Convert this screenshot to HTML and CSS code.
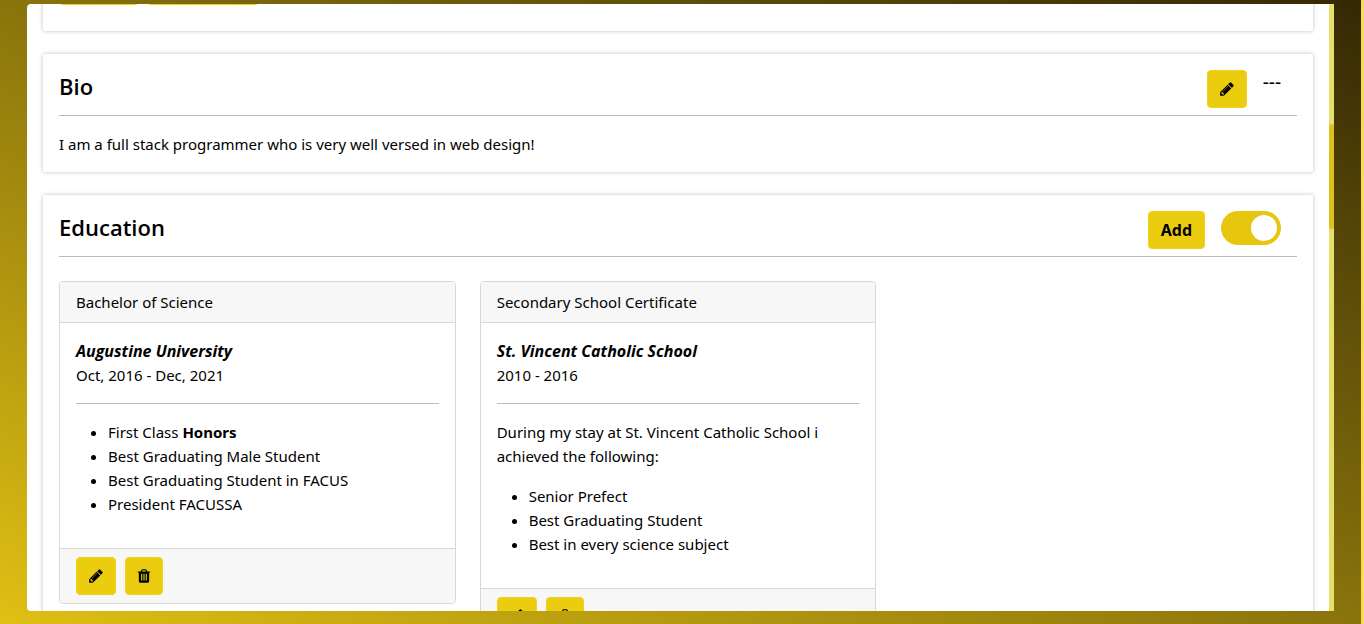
FILE: index.html
```html
<!DOCTYPE html>
<html lang="en">
<head>
<meta charset="utf-8">
<title>Profile</title>
<link rel="stylesheet" href="styles.css">
</head>
<body>
<svg class="sprite" aria-hidden="true">
  <symbol id="pencil" viewBox="0 0 1792 1792"><path d="M491 1536l91-91-235-235-91 91v107h128v128h107zm523-928q0-22-22-22-10 0-17 7l-542 542q-7 7-7 17 0 22 22 22 10 0 17-7l542-542q7-7 7-17zm-54-192l416 416-832 832h-416v-416zm683 96q0 53-37 90l-166 166-416-416 166-165q36-38 90-38 53 0 91 38l235 234q37 39 37 91z"/></symbol>
  <symbol id="trash" viewBox="112 0 1568 1792"><path d="M704 1376v-704q0-14-9-23t-23-9h-64q-14 0-23 9t-9 23v704q0 14 9 23t23 9h64q14 0 23-9t9-23zm256 0v-704q0-14-9-23t-23-9h-64q-14 0-23 9t-9 23v704q0 14 9 23t23 9h64q14 0 23-9t9-23zm256 0v-704q0-14-9-23t-23-9h-64q-14 0-23 9t-9 23v704q0 14 9 23t23 9h64q14 0 23-9t9-23zm-544-992h448l-48-117q-7-9-17-11h-317q-10 2-17 11zm928 32v64q0 14-9 23t-23 9h-96v948q0 83-47 143.5t-113 60.5h-832q-66 0-113-58.5t-47-141.5v-952h-96q-14 0-23-9t-9-23v-64q0-14 9-23t23-9h309l70-167q15-37 54-63t79-26h320q40 0 79 26t54 63l70 167h309q14 0 23 9t9 23z"/></symbol>
</svg>
<div class="page">
  <div class="panel">
    <main class="content">
      <section class="card card-top">
        <button class="btn btn-short" aria-label="Edit"></button>
        <button class="btn btn-long" aria-label="View"></button>
      </section>

      <section class="card">
        <header class="card-head">
          <h2>Bio</h2>
          <div class="actions">
            <button class="btn" aria-label="Edit bio"><svg class="icon"><use href="#pencil"/></svg></button>
            <span class="dashes">---</span>
          </div>
        </header>
        <p>I am a full stack programmer who is very well versed in web design!</p>
      </section>

      <section class="card">
        <header class="card-head">
          <h2>Education</h2>
          <div class="actions">
            <button class="btn btn-text">Add</button>
            <input class="toggle" type="checkbox" role="switch" aria-label="Show education" checked>
          </div>
        </header>
        <div class="entries">
          <article class="entry">
            <h3 class="entry-head">Bachelor of Science</h3>
            <div class="entry-body">
              <div class="school">Augustine University</div>
              <div>Oct, 2016 - Dec, 2021</div>
              <hr>
              <ul>
                <li>First Class <b>Honors</b></li>
                <li>Best Graduating Male Student</li>
                <li>Best Graduating Student in FACUS</li>
                <li>President FACUSSA</li>
              </ul>
            </div>
            <footer class="entry-foot">
              <button class="btn" aria-label="Edit"><svg class="icon"><use href="#pencil"/></svg></button>
              <button class="btn" aria-label="Delete"><svg class="icon icon-narrow"><use href="#trash"/></svg></button>
            </footer>
          </article>
          <article class="entry">
            <h3 class="entry-head">Secondary School Certificate</h3>
            <div class="entry-body">
              <div class="school">St. Vincent Catholic School</div>
              <div>2010 - 2016</div>
              <hr>
              <p>During my stay at St. Vincent Catholic School i achieved the following:</p>
              <ul>
                <li>Senior Prefect</li>
                <li>Best Graduating Student</li>
                <li>Best in every science subject</li>
              </ul>
            </div>
            <footer class="entry-foot">
              <button class="btn" aria-label="Edit"><svg class="icon"><use href="#pencil"/></svg></button>
              <button class="btn" aria-label="Delete"><svg class="icon icon-narrow"><use href="#trash"/></svg></button>
            </footer>
          </article>
        </div>
      </section>
    </main>
    <div class="track"><div class="thumb"></div></div>
  </div>
  <div class="page-track"></div>
</div>
</body>
</html>
```
FILE: styles.css
```css
* { box-sizing: border-box; }

body {
  margin: 0;
  color: #000;
  font: 15px/24px "Noto Sans", "Open Sans", sans-serif;
}

h2, h3, p, ul { margin: 0; }

.sprite { display: none; }

.page {
  display: flex;
  height: 100vh;
  background: linear-gradient(to top right, #e0c014, #332804);
}

.panel {
  flex: 1;
  display: flex;
  margin: 4px 27px 13px;
  overflow: hidden;
  background: #fff;
  border-radius: 4px 0 0 4px;
}

.page-track { width: 3px; background: #f8dc50; }

.content {
  flex: 1;
  display: flex;
  flex-direction: column;
  gap: 23px;
  margin-top: -69px;
  padding: 16px;
}

.card {
  padding: 16px;
  background: #fff;
  border-radius: 2px;
  box-shadow: 0 0 4px rgba(0, 0, 0, 0.25);
}

.card-top {
  display: flex;
  gap: 8px;
  padding-bottom: 26px;
}

.card-head {
  display: flex;
  justify-content: space-between;
  height: 46px;
  margin-bottom: 16px;
  padding-right: 16px;
  border-bottom: 1px solid #bbb;
}

.card-head h2 {
  font-family: "Open Sans", "Noto Sans", sans-serif;
  font-size: 22px;
  font-weight: 600;
  line-height: 32px;
}

.actions {
  display: flex;
  align-items: flex-start;
  gap: 16px;
}

.btn {
  display: inline-flex;
  align-items: center;
  justify-content: center;
  height: 38px;
  padding: 0 11px;
  border: 1px solid #f0d21c;
  border-radius: 4px;
  background: #eccc0e;
  color: #000;
  font: inherit;
  font-weight: 700;
}

.btn-text {
  padding: 0 12px;
  font-size: 16px;
}

.btn-short { width: 80px; }
.btn-long { width: 112px; }

.dashes { font-size: 19px; }

.icon { width: 16px; height: 16px; }
.icon-narrow { width: 14px; }

.toggle {
  appearance: none;
  display: flex;
  justify-content: flex-end;
  width: 60px;
  height: 34px;
  margin: 0;
  padding: 4px;
  border-radius: 17px;
  background: #e6c60e;
}

.toggle::before {
  content: "";
  width: 26px;
  height: 26px;
  border-radius: 50%;
  background: #fff;
}

.entries {
  display: grid;
  grid-template-columns: repeat(3, 1fr);
  align-items: start;
  gap: 24px;
  padding-top: 8px;
}

.entry {
  border: 1px solid #d8d8d8;
  border-radius: 4px;
  overflow: hidden;
}

.entry-head {
  padding: 8px 16px;
  border-bottom: 1px solid #d8d8d8;
  background: #f7f7f7;
  font-size: 15px;
  font-weight: 400;
}

.entry-body { padding: 16px; }

.school {
  font-family: "Open Sans", "Noto Sans", sans-serif;
  font-size: 16px;
  font-weight: 700;
  font-style: italic;
}

.entry-body hr {
  height: 1px;
  margin: 16px 0;
  border: 0;
  background: #bbb;
}

.entry-body p { margin-bottom: 16px; }

.entry-body ul {
  margin-bottom: 16px;
  padding-left: 32px;
}

.entry-foot {
  display: flex;
  gap: 9px;
  padding: 8px 16px;
  border-top: 1px solid #d8d8d8;
  background: #f7f7f7;
}

.track {
  display: flex;
  flex-direction: column;
  width: 5px;
  padding-top: 120px;
  background: #e6df6c;
}

.thumb {
  height: 105px;
  border-radius: 3px;
  background: #dcc01c;
}
```
